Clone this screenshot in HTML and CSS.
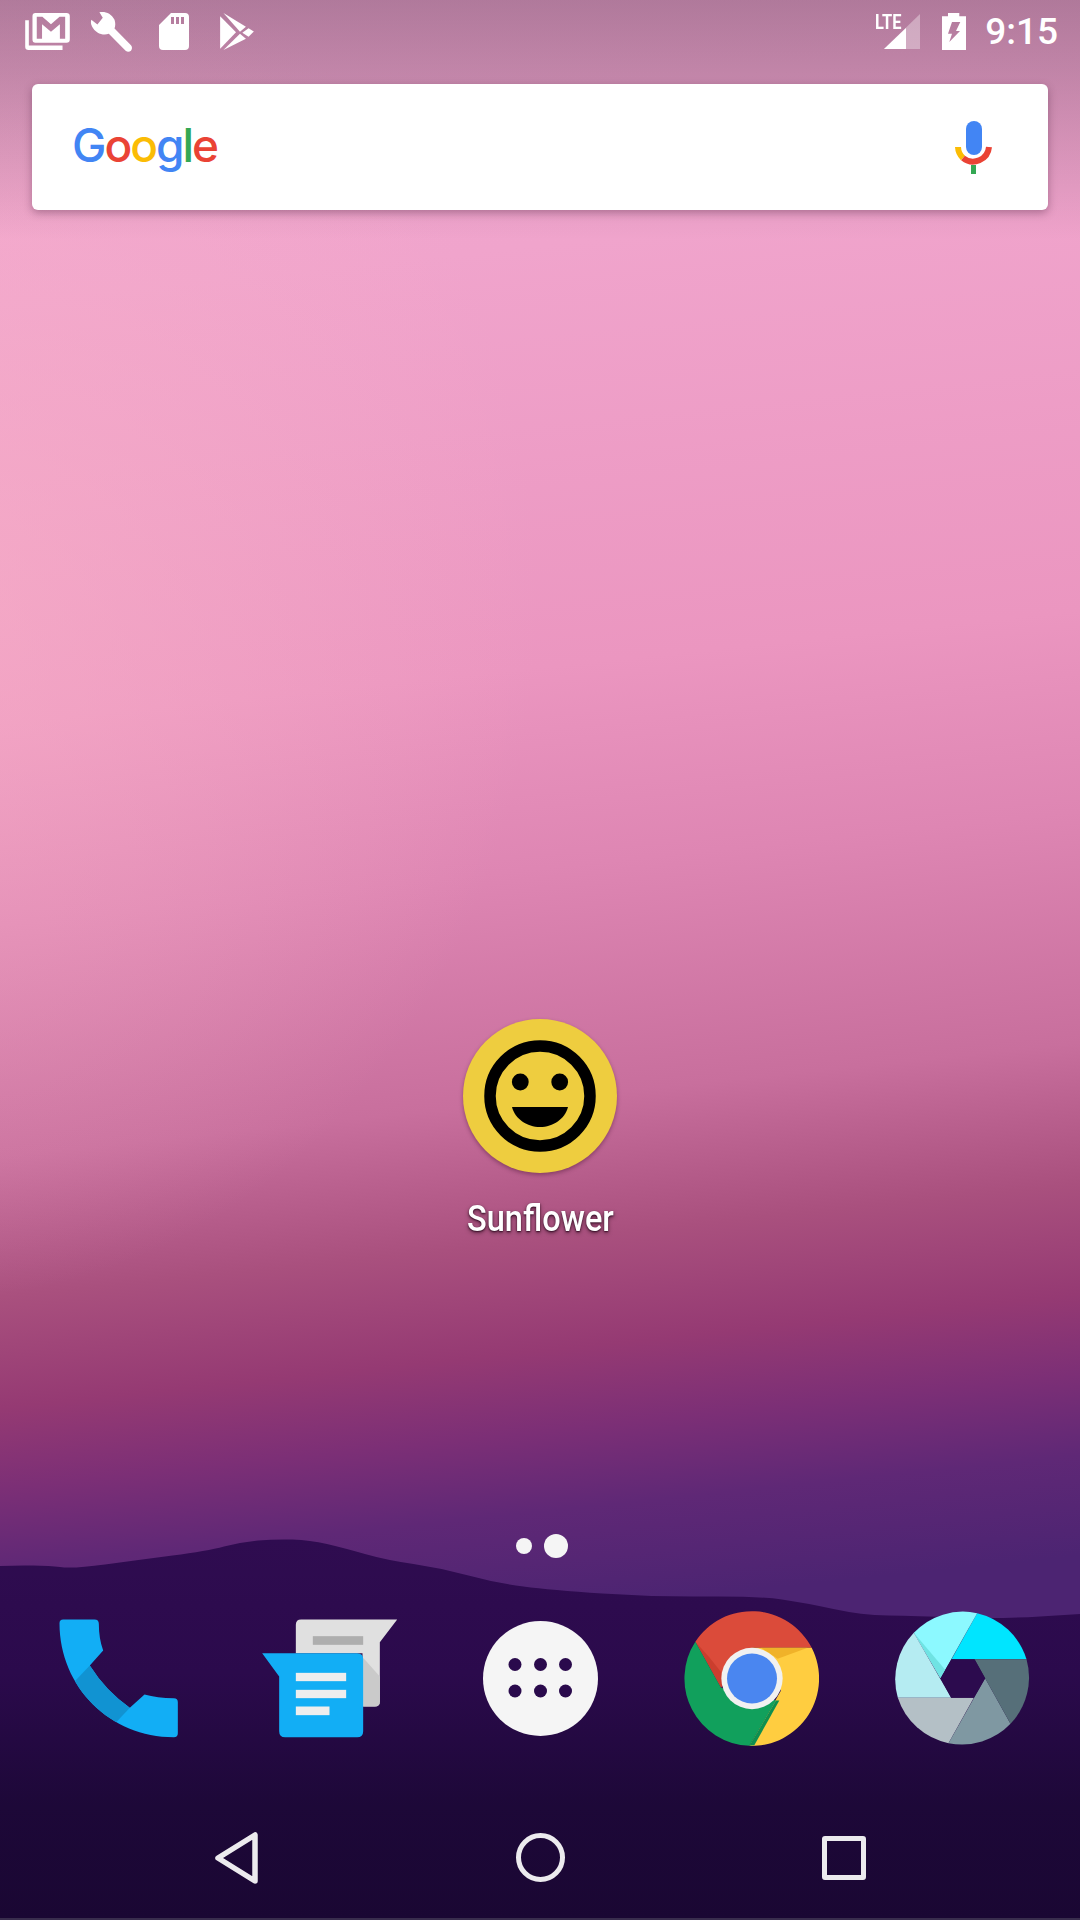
FILE: index.html
```html
<!DOCTYPE html>
<html lang="en">
<head>
    <meta charset="UTF-8">
    <meta name="viewport" content="width=device-width, initial-scale=1.0">
    <title>Home screen</title>
    <link rel="stylesheet" href="styles.css">
</head>
<body>
    <div class="screen">
        <!-- hills at the bottom of the wallpaper -->
        <svg class="hills" viewBox="0 0 1080 1920">
            <defs>
                <linearGradient id="hillFill" x1="0" y1="0" x2="0" y2="1">
                    <stop offset="0" stop-color="#2f0c50"/>
                    <stop offset="0.35" stop-color="#2b0a4c"/>
                    <stop offset="0.7" stop-color="#1d0838"/>
                    <stop offset="1" stop-color="#1a0733"/>
                </linearGradient>
            </defs>
            <path fill="url(#hillFill)" d="M0 1566 L24 1565.5 Q48 1565 60 1567 Q72 1569 105 1564.5 Q138 1560 172.5 1555.5 Q207 1551 224 1546.5 Q241 1542 258 1540.5 Q275 1539 292.5 1539.5 Q310 1540 327 1544 Q344 1548 365 1554 Q386 1560 413.5 1564 Q441 1568 468.5 1575.5 Q496 1583 523.5 1586.5 Q551 1590 602.5 1593.5 Q654 1597 706 1596.5 Q758 1596 782 1599.5 Q806 1603 833.5 1609 Q861 1615 888.5 1615.5 Q916 1616 957.5 1617.5 Q999 1619 1040 1616.5 L1080 1614 V1920 H0 Z"/>
        </svg>

        <div class="status-bar">
            <div class="status-cell">
                <svg class="gmail" viewBox="75 38 135 112">
                    <path d="M106 38 H200 Q210 38 210 48 V118 Q210 128 200 128 H106 Q97 128 97 118 V48 Q97 38 106 38 Z M110 49 V116 H126 V72 L153 95 L180 72 V116 H196 V49 H179 L153 72 L127 49 Z" fill="#fff" fill-rule="evenodd"/>
                    <path d="M75 60 H86 V136 H188 V150 H85 Q75 150 75 140 Z" fill="#fff"/>
                </svg>
            </div>
            <div class="status-cell">
                <svg class="wrench" viewBox="12 6 125 125">
                    <path d="M40 10 C55 6 75 12 85 32 C88 42 88 50 85 58 L134 108 Q140 116 134 124 Q126 130 118 124 L68 74 C50 80 28 72 18 52 C14 44 14 38 16 32 L34 46 L50 26 Z" fill="#fff"/>
                </svg>
            </div>
            <div class="status-cell">
                <svg class="sdcard" viewBox="0 0 30 37">
                    <path d="M12 0 H26 Q30 0 30 4 V33 Q30 37 26 37 H4 Q0 37 0 33 V12 Z M12 4 V11 H15 V4 Z M17 4 V11 H20 V4 Z M22 4 V11 H25 V4 Z" fill="#fff" fill-rule="evenodd"/>
                </svg>
            </div>
            <div class="status-cell">
                <svg class="play" viewBox="660 38 102 112">
                    <path d="M660 48 L708 96 L660 146 Z" fill="#fff"/>
                    <path d="M670 38 L738 80 L720 95 Z" fill="#fff"/>
                    <path d="M720 101 L738 116 L670 150 Z" fill="#fff"/>
                    <path d="M746 84 L762 94 L746 110 L727 98 Z" fill="#fff"/>
                </svg>
            </div>
            <div class="status-right">
                <div class="signal">
                    <span class="lte">LTE</span>
                    <svg class="signal-bars" viewBox="0 0 36 35">
                        <path d="M36 0 V35 H0 Z" fill="#fff" fill-opacity="0.35"/>
                        <path d="M22 14 V35 H0 Z" fill="#fff"/>
                    </svg>
                </div>
                <svg class="battery" viewBox="0 0 24 37">
                    <path d="M6 0 H17.3 V3.3 H24 V37 H0 V3.3 H6 Z M10 9 H18.3 L14 18 H18 L7.3 29 L10 20.7 H6 Z" fill="#fff" fill-rule="evenodd"/>
                </svg>
                <span class="clock">9:15</span>
            </div>
        </div>

        <div class="search-card">
            <div class="google-logo"><span class="g-blue">G</span><span class="g-red">o</span><span class="g-yellow">o</span><span class="g-blue">g</span><span class="g-green">l</span><span class="g-red">e</span></div>
            <svg class="mic" viewBox="0 0 38 54">
                <rect x="11" y="0" width="16" height="34" rx="8" fill="#4285f4"/>
                <rect x="16" y="44" width="5" height="9" fill="#34a853"/>
                <path d="M3 26 A16 16 0 0 0 8 37" fill="none" stroke="#fbbc05" stroke-width="6"/>
                <path d="M8 37 A16 16 0 0 0 34 26" fill="none" stroke="#ea4335" stroke-width="6"/>
            </svg>
        </div>

        <div class="app">
            <svg class="app-icon" viewBox="0 0 154 154">
                <circle cx="77" cy="77" r="77" fill="#eecd3f"/>
                <circle cx="77" cy="77" r="50" fill="none" stroke="#000" stroke-width="11.5"/>
                <circle cx="57.3" cy="63" r="8.4" fill="#000"/>
                <circle cx="96.7" cy="63" r="8.4" fill="#000"/>
                <path d="M49 88 H105 C102 100 90 108 77 108 C64 108 52 100 49 88 Z" fill="#000"/>
            </svg>
            <span class="app-label">Sunflower</span>
        </div>

        <div class="page-dots">
            <span class="dot"></span>
            <span class="dot dot-active"></span>
        </div>

        <div class="dock">
            <!-- phone -->
            <svg class="dock-icon" viewBox="31.5 31.5 405 405">
                <defs>
                    <clipPath id="phoneClip">
                        <path d="M68 57 H162 Q175 57 175 70 Q175 115 188 150 L148 195 Q195 270 268 322 L312 282 Q350 293 400 293 Q412 293 412 305 V398 Q412 410 400 410 C210 410 57 260 57 68 Q57 57 68 57 Z"/>
                    </clipPath>
                </defs>
                <path d="M68 57 H162 Q175 57 175 70 Q175 115 188 150 L148 195 Q195 270 268 322 L312 282 Q350 293 400 293 Q412 293 412 305 V398 Q412 410 400 410 C210 410 57 260 57 68 Q57 57 68 57 Z" fill="#12aef5"/>
                <polygon points="105,240 148,195 268,322 230,362 150,400 60,300" fill="#1193d2" clip-path="url(#phoneClip)"/>
            </svg>
            <!-- messenger -->
            <svg class="dock-icon" viewBox="664.5 31.5 405 405">
                <path d="M782 57 H1070 L1018 125 V303 Q1018 318 1003 318 H966 V158 H766 V73 Q766 57 782 57 Z" fill="#e0e0e0"/>
                <path d="M968 172 L1018 228 V303 Q1018 318 1003 318 H968 Z" fill="#cacaca"/>
                <rect x="817" y="107" width="151" height="26" fill="#aeaeae"/>
                <path d="M665 158 H950 Q968 158 968 176 V392 Q968 410 950 410 H734 Q716 410 716 392 V228 Z" fill="#12aef5"/>
                <rect x="766" y="217" width="151" height="25" fill="#eeeeee"/>
                <rect x="766" y="268" width="151" height="25" fill="#eeeeee"/>
                <rect x="766" y="318" width="101" height="26" fill="#eeeeee"/>
            </svg>
            <!-- app drawer -->
            <svg class="dock-icon" viewBox="0 0 135 135">
                <circle cx="67.5" cy="67.5" r="57.5" fill="#f5f5f5"/>
                <g fill="#2a0a4c">
                    <circle cx="42" cy="53.5" r="6.5"/>
                    <circle cx="67.5" cy="53.5" r="6.5"/>
                    <circle cx="92.5" cy="53.5" r="6.5"/>
                    <circle cx="42" cy="80" r="6.5"/>
                    <circle cx="67.5" cy="80" r="6.5"/>
                    <circle cx="92.5" cy="80" r="6.5"/>
                </g>
            </svg>
            <!-- chrome -->
            <svg class="dock-icon" viewBox="669 31.5 405 405">
                <path d="M703 124 A202 202 0 0 1 1052 142 H873 L780 262 Z" fill="#db4b3a"/>
                <path d="M703 124 L780 262 L800 240 L745 170 Z" fill="#c53929" fill-opacity="0.7"/>
                <path d="M1052 142 A202 202 0 0 1 865 436 L960 270 L873 142 Z" fill="#ffcd40"/>
                <path d="M900 142 H1040 L950 175 Z" fill="#eaa71f" fill-opacity="0.7"/>
                <path d="M865 436 A202 202 0 0 1 703 124 L780 262 L945 300 Z" fill="#11a05c"/>
                <path d="M945 300 L865 436 L880 434 L955 300 Z" fill="#0e8f50"/>
                <circle cx="873" cy="234" r="92" fill="#f1f1f1"/>
                <circle cx="873" cy="234" r="75" fill="#4a86f0"/>
            </svg>
            <!-- camera -->
            <svg class="dock-icon" viewBox="43.5 31.5 405 405">
                <path d="M290 38 A202 202 0 0 1 438 176 H213 Z" fill="#00e5ff"/>
                <path d="M100 97 A202 202 0 0 1 290 38 L180 233 Z" fill="#8cf9ff"/>
                <path d="M100 97 L180 233 L194 208 Z" fill="#6fe3e3"/>
                <path d="M100 97 L212 292 H52 A202 202 0 0 1 100 97 Z" fill="#b5ecf2"/>
                <path d="M52 292 H280 L204 428 A202 202 0 0 1 52 292 Z" fill="#b4c0c6"/>
                <path d="M204 428 L314 233 L390 370 A202 202 0 0 1 204 428 Z" fill="#7f98a2"/>
                <path d="M282 176 H438 A202 202 0 0 1 390 370 Z" fill="#566f79"/>
                <path d="M180 233 L213 176 H282 L314 233 L280 292 H212 Z" fill="#2c0b4e"/>
            </svg>
        </div>

        <div class="nav-bar">
            <svg class="nav-btn" viewBox="0 0 48 56">
                <path d="M5 28 L42 5 V51 Z" fill="none" stroke="#ecebee" stroke-width="5.5" stroke-linejoin="round"/>
            </svg>
            <span class="nav-home"></span>
            <span class="nav-recent"></span>
        </div>
    </div>
</body>
</html>
```

FILE: styles.css
```css
* {
    box-sizing: border-box;
}

body {
    margin: 0;
    font-family: Roboto, sans-serif;
    background-color: #000;
}

.screen {
    position: relative;
    width: 1080px;
    height: 1920px;
    overflow: hidden;
    display: flex;
    flex-direction: column;
    background-image:
        linear-gradient(180deg, rgba(60, 40, 60, 0.36) 0, rgba(60, 40, 60, 0.26) 75px, rgba(60, 40, 60, 0) 240px),
        radial-gradient(600px 700px at -60px 600px, rgba(250, 180, 200, 0.55), rgba(250, 180, 200, 0)),
        linear-gradient(174deg, #f2a8d2 0, #f0a4cc 300px, #eb96c0 720px, #de86b3 920px, #c86f9d 1150px, #a9507e 1290px, #953a73 1400px, #7c2f76 1480px, #5f2876 1560px, #4c2472 1660px);
}

.hills {
    position: absolute;
    top: 0;
    left: 0;
    width: 1080px;
    height: 1920px;
}

/* status bar */
.status-bar {
    position: relative;
    height: 63px;
    padding-left: 16px;
    display: flex;
    align-items: center;
}

.status-cell {
    width: 63px;
    height: 63px;
    display: flex;
    align-items: center;
    justify-content: center;
}

.gmail {
    width: 45px;
    height: 37px;
}

.wrench {
    width: 42px;
    height: 42px;
}

.sdcard {
    width: 30px;
    height: 37px;
}

.play {
    width: 34px;
    height: 37px;
}

.status-right {
    margin-left: auto;
    padding-right: 22px;
    display: flex;
    align-items: center;
}

.signal {
    position: relative;
    width: 45px;
    height: 36px;
    margin-right: 22px;
}

.signal-bars {
    position: absolute;
    right: 0;
    top: 0;
    width: 36px;
    height: 35px;
}

.lte {
    position: absolute;
    left: 0;
    top: -2px;
    font-size: 21px;
    line-height: 20px;
    font-weight: 700;
    color: #fff;
    transform: scaleX(0.78);
    transform-origin: left center;
}

.battery {
    width: 24px;
    height: 37px;
    margin-right: 19px;
}

.clock {
    font-size: 37px;
    font-weight: 500;
    line-height: 63px;
    color: #fff;
}

/* search widget */
.search-card {
    position: relative;
    height: 126px;
    margin: 21px 32px 0;
    padding: 0 55px 0 40px;
    background-color: #fff;
    border-radius: 6px;
    box-shadow: 0 3px 8px rgba(60, 20, 50, 0.35);
    display: flex;
    align-items: center;
    justify-content: space-between;
}

.google-logo {
    font-family: Inter, sans-serif;
    font-size: 46px;
    font-weight: 500;
    line-height: 60px;
    letter-spacing: -2px;
    margin-top: -4px;
}

.g-blue {
    color: #4285f4;
}

.g-red {
    color: #ea4335;
}

.g-yellow {
    color: #fbbc05;
}

.g-green {
    color: #34a853;
}

.mic {
    width: 38px;
    height: 54px;
    margin-top: 3px;
}

/* app on the home screen */
.app {
    position: relative;
    margin-top: 809px;
    display: flex;
    flex-direction: column;
    align-items: center;
}

.app-icon {
    width: 154px;
    height: 154px;
    filter: drop-shadow(0 2px 2px rgba(60, 10, 40, 0.4));
}

.app-label {
    margin-top: 21px;
    font-size: 37px;
    font-weight: 500;
    line-height: 50px;
    color: #fff;
    transform: scaleX(0.88);
    text-shadow: 0 1px 2px rgba(30, 0, 20, 0.8), 0 2px 5px rgba(30, 0, 20, 0.5);
}

.page-dots {
    position: relative;
    margin-top: 290px;
    height: 24px;
    padding-left: 516px;
    display: flex;
    align-items: center;
    gap: 12px;
}

.dot {
    width: 16px;
    height: 16px;
    border-radius: 50%;
    background-color: #f5f5f5;
}

.dot-active {
    width: 24px;
    height: 24px;
}

/* favourites */
.dock {
    position: relative;
    margin-top: 53px;
    padding: 0 12.5px;
    display: grid;
    grid-template-columns: repeat(5, 211px);
    justify-items: center;
}

.dock-icon {
    width: 135px;
    height: 135px;
}

/* navigation buttons */
.nav-bar {
    position: relative;
    margin-top: 49px;
    height: 126px;
    border-bottom: 2px solid #392d4d;
}

.nav-btn {
    position: absolute;
    left: 213px;
    top: 35px;
    width: 48px;
    height: 56px;
}

.nav-home {
    position: absolute;
    left: 515.5px;
    top: 38.5px;
    width: 49px;
    height: 49px;
    border: 5px solid #ecebee;
    border-radius: 50%;
}

.nav-recent {
    position: absolute;
    left: 822px;
    top: 41px;
    width: 44px;
    height: 44px;
    border: 5.5px solid #ecebee;
    border-radius: 3px;
}
```
